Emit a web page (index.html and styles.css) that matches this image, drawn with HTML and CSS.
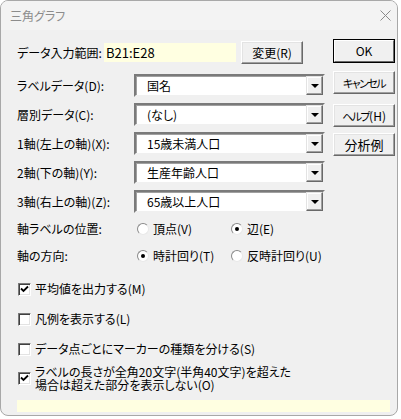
FILE: index.html
```html
<!DOCTYPE html>
<html lang="ja">
<head>
<meta charset="utf-8">
<title>三角グラフ</title>
<link rel="stylesheet" href="styles.css">
</head>
<body>
<div class="window">
  <div class="titlebar">
    <span class="title">三角グラフ</span>
    <svg class="close" width="11" height="11" viewBox="0 0 11 11"><path d="M0.5 0.5 L10.5 10.5 M10.5 0.5 L0.5 10.5"/></svg>
  </div>
  <div class="main">
    <div class="form">
      <div class="row range-row">
        <span class="label short">データ入力範囲:</span>
        <span class="range">B21:E28</span>
        <span class="btn change">変更(R)</span>
      </div>
      <div class="row combo-row first">
        <span class="label">ラベルデータ(D):</span>
        <div class="combo"><span class="value">国名</span><span class="drop"><span class="tri"></span></span></div>
      </div>
      <div class="row combo-row">
        <span class="label">層別データ(C):</span>
        <div class="combo"><span class="value">(なし)</span><span class="drop"><span class="tri"></span></span></div>
      </div>
      <div class="row combo-row">
        <span class="label">1軸(左上の軸)(X):</span>
        <div class="combo"><span class="value">15歳未満人口</span><span class="drop"><span class="tri"></span></span></div>
      </div>
      <div class="row combo-row">
        <span class="label">2軸(下の軸)(Y):</span>
        <div class="combo"><span class="value">生産年齢人口</span><span class="drop"><span class="tri"></span></span></div>
      </div>
      <div class="row combo-row">
        <span class="label">3軸(右上の軸)(Z):</span>
        <div class="combo"><span class="value">65歳以上人口</span><span class="drop"><span class="tri"></span></span></div>
      </div>
      <div class="row radio-row first">
        <span class="label">軸ラベルの位置:</span>
        <span class="radio"><span class="circle"></span>頂点(V)</span>
        <span class="radio"><span class="circle on"></span>辺(E)</span>
      </div>
      <div class="row radio-row">
        <span class="label">軸の方向:</span>
        <span class="radio"><span class="circle on"></span>時計回り(T)</span>
        <span class="radio"><span class="circle"></span>反時計回り(U)</span>
      </div>
    </div>
    <div class="buttons">
      <span class="btn side ok"><span class="inner">OK</span></span>
      <span class="btn side cancel"><span class="kana">キャンセル</span></span>
      <span class="btn side help"><span class="kana">ヘルプ</span>(H)</span>
      <span class="btn side example">分析例</span>
    </div>
  </div>
  <div class="checks">
    <div class="check-row">
      <span class="box"><svg width="9" height="9" viewBox="0 0 9 9"><path d="M1 3.5 L3.5 6 L8 1.5"/></svg></span>
      <span>平均値を出力する(M)</span>
    </div>
    <div class="check-row">
      <span class="box"></span>
      <span>凡例を表示する(L)</span>
    </div>
    <div class="check-row">
      <span class="box"></span>
      <span>データ点ごとにマーカーの種類を分ける(S)</span>
    </div>
    <div class="check-row two">
      <span class="box"><svg width="9" height="9" viewBox="0 0 9 9"><path d="M1 3.5 L3.5 6 L8 1.5"/></svg></span>
      <div class="two-text">
        <div class="line">ラベルの長さが全角20文字(半角40文字)を超えた</div>
        <div class="line">場合は超えた部分を表示しない(O)</div>
      </div>
    </div>
  </div>
  <div class="status"></div>
</div>
</body>
</html>
```

FILE: styles.css
```css
* { box-sizing: border-box; }

body {
  margin: 0;
  background: #ffffff;
  font-family: "Noto Sans CJK JP", "Noto Sans", sans-serif;
  font-size: 12px;
  font-feature-settings: "palt";
  color: #000;
}

.window {
  width: 398px;
  height: 416px;
  border: 1px solid #a8a8a8;
  border-radius: 8px;
  background: #f0f0f0;
  overflow: hidden;
}

.titlebar {
  height: 29px;
  display: flex;
  align-items: center;
  justify-content: space-between;
  padding: 0 6px 0 9px;
  background: #f3f3f3;
}

.title {
  color: #8c8c8c;
  font-size: 12px;
  line-height: 16px;
}

.close {
  fill: none;
  stroke: #8a8a8a;
  stroke-width: 1;
}

.main {
  display: flex;
}

.form {
  width: 324px;
  padding-left: 16px;
}

.row {
  display: flex;
  align-items: center;
  line-height: 16px;
}

.label {
  width: 117px;
  flex: none;
  white-space: nowrap;
}

.label.short {
  width: 87px;
}

.range-row {
  margin-top: 11px;
  height: 23px;
}

.range {
  width: 132px;
  height: 19px;
  background: #ffffe1;
  padding-left: 2px;
  line-height: 19px;
  font-size: 13px;
}

.btn {
  display: flex;
  align-items: center;
  justify-content: center;
  background: #f0f0f0;
  border: 1px solid;
  border-color: #ffffff #696969 #696969 #ffffff;
  box-shadow: inset -1px -1px #a0a0a0, inset 1px 1px #e3e3e3;
  white-space: nowrap;
  line-height: 16px;
}

.change {
  margin-left: 5px;
  width: 62px;
  height: 23px;
}

.combo-row {
  margin-top: 6px;
  height: 23px;
}

.combo-row.first {
  margin-top: 10px;
}

.combo {
  width: 191px;
  height: 23px;
  display: flex;
  align-items: center;
  background: #ffffff;
  border: 2px solid;
  border-color: #7a7a7a #f0f0f0 #f0f0f0 #7a7a7a;
  box-shadow: inset 1px 1px #a0a0a0;
  padding: 0 0 0 11px;
}

.value {
  flex: 1;
  white-space: nowrap;
}

.drop {
  width: 17px;
  height: 19px;
  display: flex;
  align-items: center;
  justify-content: center;
  background: #f0f0f0;
  border: 1px solid;
  border-color: #e3e3e3 #696969 #696969 #e3e3e3;
  box-shadow: inset -1px -1px #a0a0a0, inset 1px 1px #ffffff;
}

.tri {
  width: 0;
  height: 0;
  border-left: 4px solid transparent;
  border-right: 4px solid transparent;
  border-top: 4px solid #000;
  margin-top: 1px;
}

.radio-row {
  margin-top: 11px;
  height: 16px;
}

.radio-row.first {
  margin-top: 8px;
}

.radio {
  display: flex;
  align-items: center;
  width: 107px;
  white-space: nowrap;
  margin-left: 3px;
}

.radio + .radio {
  margin-left: 0;
}

.circle {
  width: 12px;
  height: 12px;
  border-radius: 50%;
  border: 1px solid;
  border-color: #8a8a8a #e8e8e8 #e8e8e8 #8a8a8a;
  background: #ffffff;
  margin-right: 4px;
  display: flex;
  align-items: center;
  justify-content: center;
}

.circle.on::after {
  content: "";
  width: 4px;
  height: 4px;
  border-radius: 50%;
  background: #000;
}

.buttons {
  margin-left: 8px;
  padding-top: 9px;
  display: flex;
  flex-direction: column;
}

.side {
  width: 62px;
  height: 23px;
}

.kana {
  letter-spacing: -1.5px;
  font-size: 11px;
}

.ok {
  height: 24px;
  border: 1px solid #000;
  box-shadow: none;
  padding: 0;
}

.ok .inner {
  width: 100%;
  height: 100%;
  display: flex;
  align-items: center;
  justify-content: center;
  border: 1px solid;
  border-color: #ffffff #696969 #696969 #ffffff;
}

.cancel { margin-top: 8px; }
.help { margin-top: 10px; }
.example { margin-top: 6px; font-size: 13px; }

.checks {
  padding-left: 17px;
  margin-top: 17px;
}

.check-row {
  display: flex;
  align-items: center;
  height: 16px;
  line-height: 16px;
  margin-bottom: 14px;
  white-space: nowrap;
}

.check-row.two {
  height: 26px;
  margin-top: -6px;
  margin-bottom: 0;
}

.two-text .line {
  line-height: 13px;
  height: 13px;
}

.box {
  width: 13px;
  height: 13px;
  flex: none;
  margin-right: 4px;
  background: #ffffff;
  border: 1px solid;
  border-color: #7a7a7a #ffffff #ffffff #7a7a7a;
  box-shadow: inset 1px 1px #404040, inset -1px -1px #e3e3e3;
  display: flex;
  align-items: center;
  justify-content: center;
}

.box svg {
  fill: none;
  stroke: #000;
  stroke-width: 1.8;
}

.status {
  margin: 9px 0 0 16px;
  width: 373px;
  height: 12px;
  background: #ffffe1;
}
```
